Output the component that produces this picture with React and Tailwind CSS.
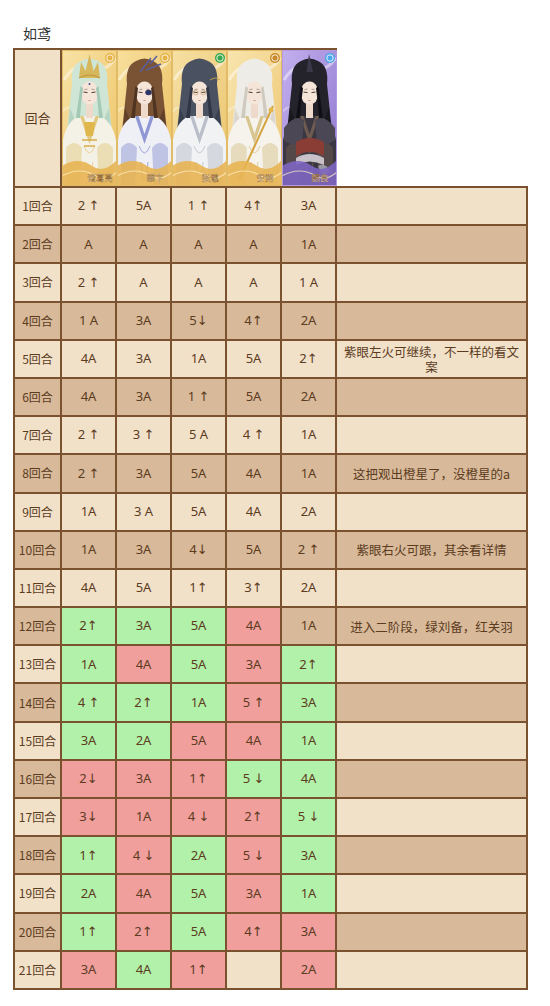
import React from "react";

const CARDS = [
  { name: "诸葛亮", bg: ["#f8e3a6", "#eec467"], hair: "#cfe5d6", hairDark: "#a3c8b4", robe: "#f4f1e6", robe2: "#e2c982", badge: "#e6b347", crown: true },
  { name: "華卞", bg: ["#f7df9c", "#ecc062"], hair: "#7a5334", hairDark: "#4f3422", robe: "#eef0f6", robe2: "#8f97d4", badge: "#e6b347", patch: true },
  { name: "张邈", bg: ["#f6e0a4", "#ebc46d"], hair: "#4a5262", hairDark: "#2f3542", robe: "#f1f2f4", robe2: "#b9bec8", badge: "#3aa84a", glasses: true },
  { name: "安朔", bg: ["#f8e5ae", "#eec672"], hair: "#eeece6", hairDark: "#cfcac0", robe: "#f6f3ec", robe2: "#d8c48e", badge: "#c98a2a", staff: true },
  { name: "颜良", bg: ["#c3b0ee", "#8e76cf"], hair: "#24232b", hairDark: "#111016", robe: "#3a3742", robe2: "#6e5a4e", badge: "#4fa6ea", armor: true },
];

function Portrait({ c, i }) {
  const g = `bg${i}`;
  return (
    <svg viewBox="0 0 55 136" preserveAspectRatio="none" className="block w-full h-full">
      <defs>
        <linearGradient id={g} x1="0" y1="0" x2="1" y2="1">
          <stop offset="0" stopColor={c.bg[0]} />
          <stop offset="1" stopColor={c.bg[1]} />
        </linearGradient>
      </defs>
      <rect x="0" y="0" width="55" height="136" fill={`url(#${g})`} />
      {/* swirls */}
      <path d="M2 30 Q14 10 30 18 Q42 24 54 8" fill="none" stroke="#ffffff" strokeOpacity="0.45" strokeWidth="3" />
      <path d="M0 62 Q10 52 18 60" fill="none" stroke="#ffffff" strokeOpacity="0.35" strokeWidth="2" />
      {/* hair back */}
      <path d="M10 34 Q8 16 19 11 Q27.5 6 36 11 Q47 16 45 34 L52 100 Q50 112 40 116 L15 116 Q5 112 3 100 Z" fill={c.hair} />
      <path d="M8 58 L4 100 Q8 110 14 114 L13 70 Z" fill={c.hairDark} opacity="0.6" />
      <path d="M47 58 L51 100 Q47 110 41 114 L42 70 Z" fill={c.hairDark} opacity="0.6" />
      {/* robe */}
      <path d="M1 136 L0 96 Q3 72 17 66 L38 66 Q52 72 55 96 L55 136 Z" fill={c.robe} />
      <path d="M18 66 L27.5 94 L37 66 L33.5 66 L27.5 84 L21.5 66 Z" fill={c.robe2} />
      <path d="M4 98 Q12 88 20 98 L18 136 L4 136 Z" fill={c.robe2} opacity="0.5" />
      <path d="M51 98 Q43 88 35 98 L37 136 L51 136 Z" fill={c.robe2} opacity="0.5" />
      <path d="M22 96 Q27.5 110 33 96 M24 112 L26 130 M31 112 L29 130" fill="none" stroke={c.robe2} strokeWidth="1" opacity="0.8" />
      {c.armor && (
        <>
          <path d="M2 78 Q12 64 22 70 L20 94 Q8 96 2 90 Z" fill="#4b4754" />
          <path d="M53 78 Q43 64 33 70 L35 94 Q47 96 53 90 Z" fill="#4b4754" />
          <path d="M14 92 Q27.5 84 42 92 L42 106 Q27.5 98 14 106 Z" fill="#8a3d34" />
          <path d="M14 108 Q27.5 100 42 108 L42 115 Q27.5 108 14 115 Z" fill="#c8c2c8" />
          <path d="M36 116 Q44 112 48 122 L40 126 Z" fill="#9a9aa4" />
        </>
      )}
      {/* neck + face */}
      <rect x="24" y="54" width="7" height="14" fill="#efd9cb" />
      <ellipse cx="27.5" cy="43" rx="9" ry="11.5" fill="#f5e4d8" />
      <path d="M21.5 42 L25.5 42.6 M29.5 42.6 L33.5 42" stroke="#4a3a3a" strokeWidth="1" />
      <path d="M22.5 39.5 L25.5 39.2 M29.5 39.2 L32.5 39.5" stroke="#6a5050" strokeWidth="0.5" />
      <path d="M26.5 50.5 L28.5 50.5" stroke="#c98a80" strokeWidth="0.9" />
      {c.patch && <ellipse cx="31.5" cy="42.5" rx="3.2" ry="2.7" fill="#2c3566" />}
      {c.glasses && (
        <>
          <circle cx="23.8" cy="42.5" r="2.4" fill="none" stroke="#b08a40" strokeWidth="0.5" />
          <circle cx="31.2" cy="42.5" r="2.4" fill="none" stroke="#b08a40" strokeWidth="0.5" />
        </>
      )}
      {/* bangs */}
      <path d="M17.5 46 Q16 29 27.5 29 Q39 29 37.5 46 Q40 24 27.5 21 Q15 24 17.5 46 Z" fill={c.hair} />
      <path d="M18.5 36 Q16 54 14 68 L18 68 Q19 52 21 38 Z" fill={c.hairDark} />
      <path d="M36.5 36 Q39 54 41 68 L37 68 Q36 52 34 38 Z" fill={c.hairDark} />
      {c.crown && (
        <>
          <path d="M17 28 L19 12 L23.5 21 L27.5 4 L31.5 21 L36 12 L38 28 Z" fill="#d7b75b" />
          <path d="M17 28 Q27.5 22 38 28" fill="none" stroke="#b89440" strokeWidth="1" />
          <circle cx="27.5" cy="34" r="1" fill="#3a4a8a" />
          <path d="M22 72 L33 72 L31 86 L24 86 Z" fill="#e0b74c" />
          <path d="M20 90 L35 90 M22 96 L33 96" stroke="#d6ae48" strokeWidth="1.5" />
        </>
      )}
      {c.patch && <path d="M23 22 L34 8 M29 20 L44 14 M33 14 L40 6" stroke="#5a5fa0" strokeWidth="1.5" />}
      {c.glasses && <path d="M38 30 Q44 26 48 30" fill="none" stroke="#c9a24a" strokeWidth="1" />}
      {c.armor && <path d="M24.5 22 L27 4 L31 22 Z" fill="#3a3848" />}
      {c.staff && (
        <>
          <path d="M12 130 L46 56" stroke="#d3a43f" strokeWidth="2" />
          <circle cx="44" cy="60" r="2.5" fill="#e2b84e" />
        </>
      )}
      {/* bottom banner */}
      <path d="M0 116 Q16 106 30 116 Q42 124 55 110 L55 136 L0 136 Z" fill={c.armor ? "#7e66c2" : "#e8b452"} opacity="0.9" />
      <path d="M0 126 Q18 116 34 126 Q44 132 55 122" fill="none" stroke="#fff1c8" strokeOpacity="0.7" strokeWidth="1.2" />
      <text x="38" y="131" textAnchor="middle" fontSize="8.5" fontFamily="'Noto Sans CJK SC', serif" fill="#fffaf0" stroke="#8a5a20" strokeWidth="0.3">
        {c.name}
      </text>
      {/* badge */}
      <circle cx="48" cy="8" r="5" fill={c.badge} />
      <circle cx="48" cy="8" r="3.2" fill="none" stroke="#ffffff" strokeOpacity="0.85" strokeWidth="1" />
      {/* frame */}
      <rect x="0.5" y="0.5" width="54" height="135" fill="none" stroke={c.armor ? "#b39ae0" : "#e2bb66"} strokeWidth="1" />
    </svg>
  );
}

const L = "bg-[#f2e1c9]";
const D = "bg-[#d8b999]";
const G = "bg-[#b2f1a9]";
const R = "bg-[#f19f9d]";

// [values], colours (g / r / -), note
const ROWS = [
  [["2 ↑", "5A", "1 ↑", "4↑", "3A"], "-----", ""],
  [["A", "A", "A", "A", "1A"], "-----", ""],
  [["2 ↑", "A", "A", "A", "1 A"], "-----", ""],
  [["1 A", "3A", "5↓", "4↑", "2A"], "-----", ""],
  [["4A", "3A", "1A", "5A", "2↑"], "-----", "紫眼左火可继续，不一样的看文案"],
  [["4A", "3A", "1 ↑", "5A", "2A"], "-----", ""],
  [["2 ↑", "3 ↑", "5 A", "4 ↑", "1A"], "-----", ""],
  [["2 ↑", "3A", "5A", "4A", "1A"], "-----", "这把观出橙星了，没橙星的a"],
  [["1A", "3 A", "5A", "4A", "2A"], "-----", ""],
  [["1A", "3A", "4↓", "5A", "2 ↑"], "-----", "紫眼右火可跟，其余看详情"],
  [["4A", "5A", "1↑", "3↑", "2A"], "-----", ""],
  [["2↑", "3A", "5A", "4A", "1A"], "gggr-", "进入二阶段，绿刘备，红关羽"],
  [["1A", "4A", "5A", "3A", "2↑"], "grgrg", ""],
  [["4 ↑", "2↑", "1A", "5 ↑", "3A"], "gggrg", ""],
  [["3A", "2A", "5A", "4A", "1A"], "ggrrg", ""],
  [["2↓", "3A", "1↑", "5 ↓", "4A"], "rrrgg", ""],
  [["3↓", "1A", "4 ↓", "2↑", "5 ↓"], "rrrrg", ""],
  [["1↑", "4 ↓", "2A", "5 ↓", "3A"], "grgrg", ""],
  [["2A", "4A", "5A", "3A", "1A"], "grgrg", ""],
  [["1↑", "2↑", "5A", "4↑", "3A"], "grgrr", ""],
  [["3A", "4A", "1↑", "", "2A"], "rgr-r", ""],
];

const B = "border-[#7b5230]";
const NUM = { fontFamily: "'Noto Sans', 'DejaVu Sans', 'Noto Sans CJK SC', sans-serif" };

export default function App() {
  return (
    <div className="w-[550px] min-h-[1006px] bg-white" style={{ fontFamily: "'Noto Sans CJK SC', 'Noto Sans', sans-serif" }}>
      <div className="pl-[23px] pt-[24px] text-[14px] leading-[18px] text-[#333333]">如鸢</div>
      <div className="ml-[13px] mt-[6px] grid grid-cols-[49px_55px_55px_55px_55px_55px_191px] grid-rows-[140px] auto-rows-[38.2px] text-[#5b3c1f]">
        {/* header */}
        <div className={`${L} border-2 ${B} flex items-center justify-center text-[13px]`}>回合</div>
        {CARDS.map((c, i) => (
          <div key={i} className={`border-t-2 border-b-2 ${B} overflow-hidden`}>
            <Portrait c={c} i={i} />
          </div>
        ))}
        <div className="bg-white border-b-2 border-[#7b5230]" />

        {ROWS.map(([vals, cols, note], r) => {
          const base = r % 2 === 0 ? L : D;
          return (
            <React.Fragment key={r}>
              <div className={`${base} border-l-2 border-r-2 border-b-2 ${B} flex items-center justify-center text-[12px]`}>
                {r + 1}回合
              </div>
              {vals.map((v, k) => {
                const bg = cols[k] === "g" ? G : cols[k] === "r" ? R : base;
                return (
                  <div key={k} style={NUM} className={`${bg} border-r-2 border-b-2 ${B} flex items-center justify-center text-[13px]`}>
                    {v}
                  </div>
                );
              })}
              <div className={`${base} border-r-2 border-b-2 ${B} flex items-center justify-center px-[4px] text-center text-[12.5px] leading-[15px]`}>
                {note}
              </div>
            </React.Fragment>
          );
        })}
      </div>
    </div>
  );
}
